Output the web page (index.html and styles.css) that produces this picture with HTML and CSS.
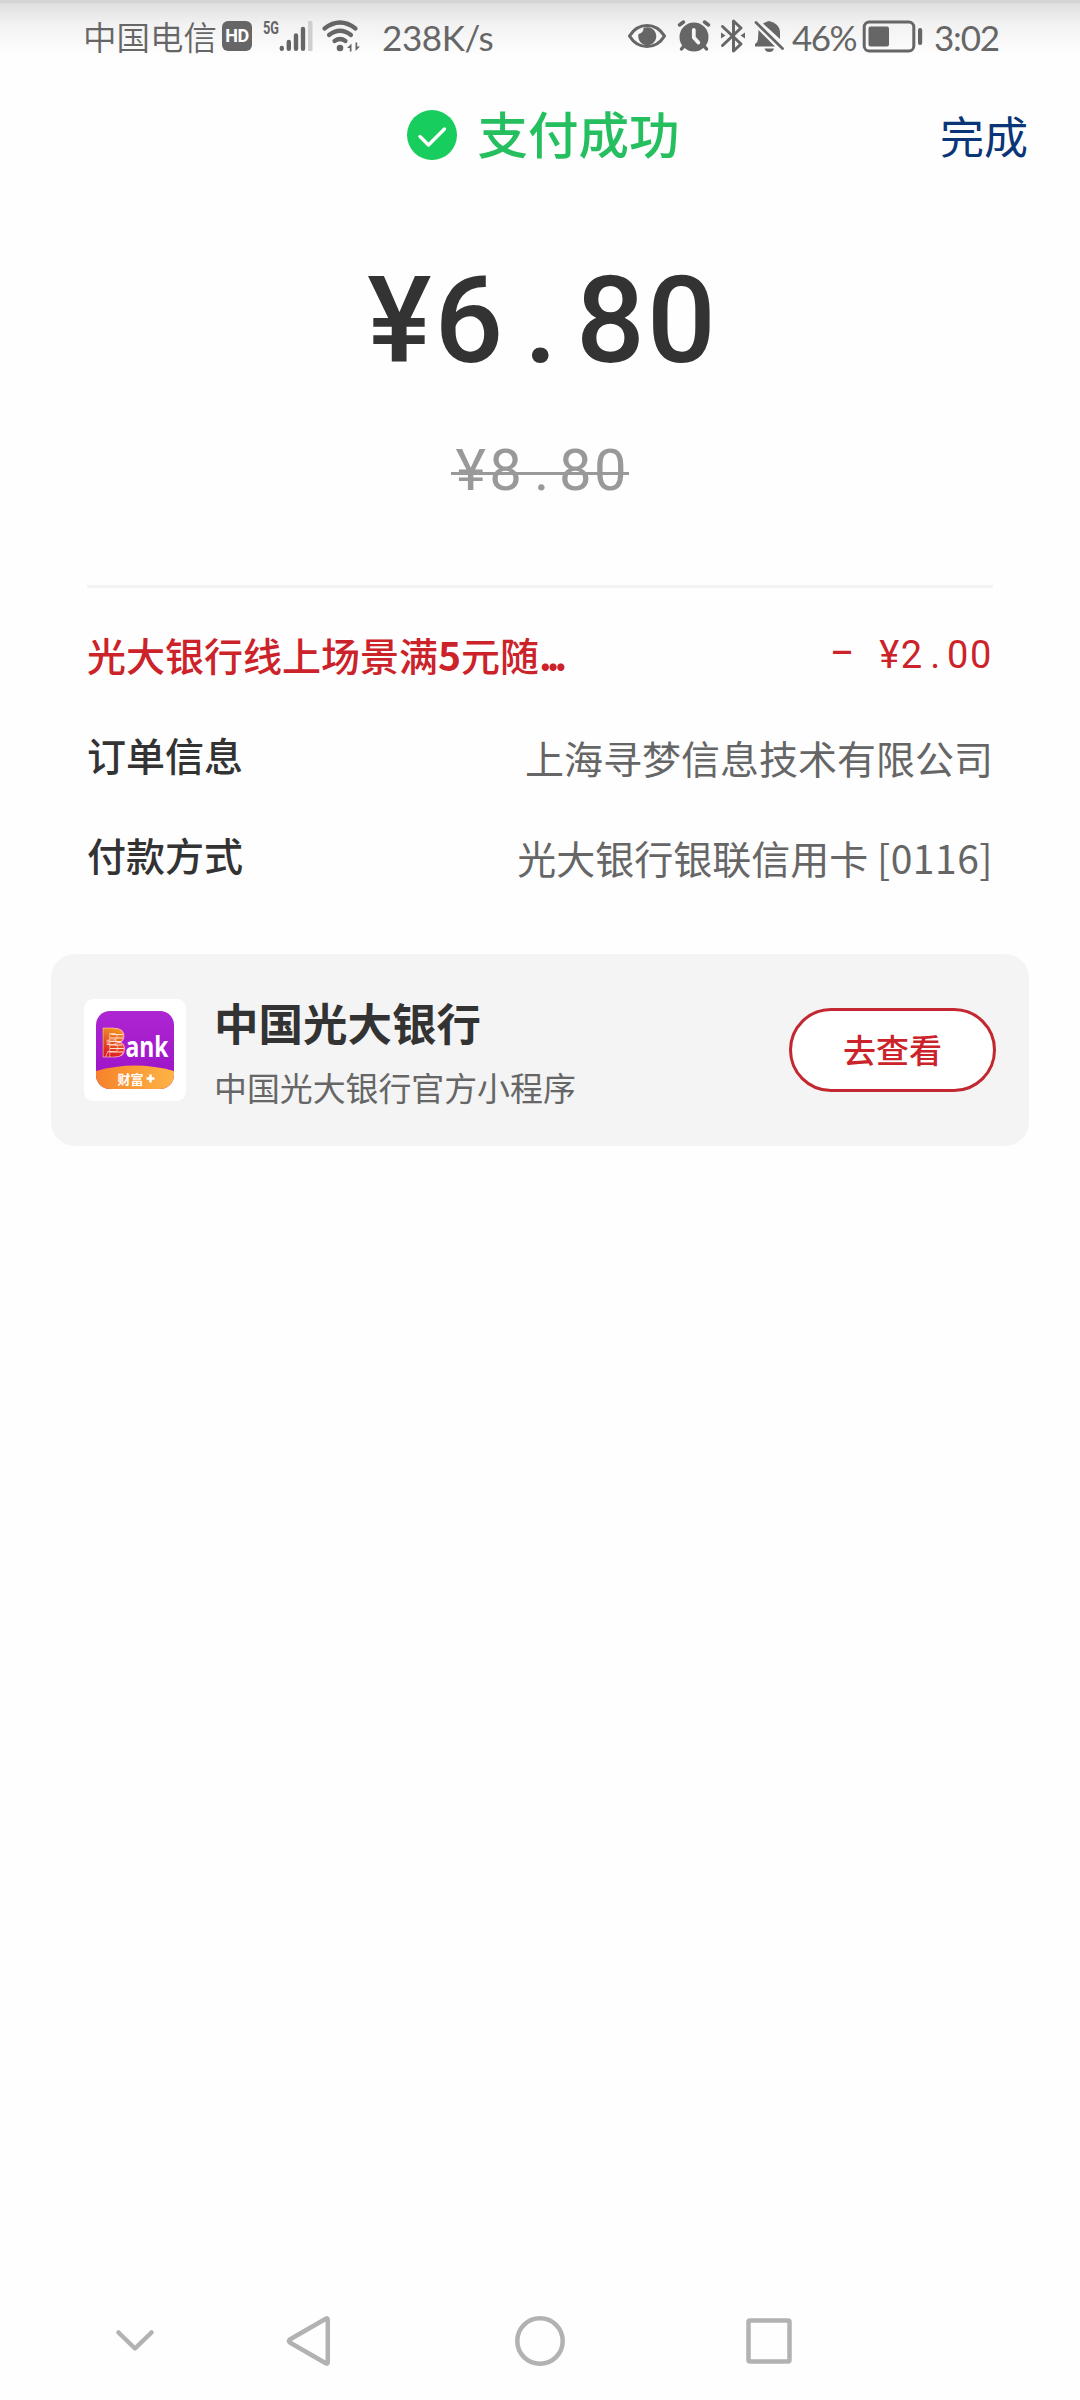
FILE: index.html
```html
<!DOCTYPE html>
<html lang="zh-CN">
<head>
<meta charset="utf-8">
<title>支付成功</title>
<link rel="stylesheet" href="styles.css">
</head>
<body>
<div class="screen">
  <header class="status">
    <div class="status-group">
      <span class="carrier">中国电信</span>
      <span class="hd">HD</span>
      <svg class="cell" width="52" height="36" viewBox="263 18 52 36">
        <text class="net" x="263" y="34" textLength="16" lengthAdjust="spacingAndGlyphs">5G</text>
        <g stroke="#666" stroke-width="4.4" stroke-linecap="round"><path d="M281.8 48v.8M288.8 42v6.8M296 35.500v13.300M303 29v19.800"/></g>
        <rect x="308" y="21" width="4.500" height="30" rx="1" fill="#cfcfcf"/>
      </svg>
      <svg class="wifi" width="40" height="36" viewBox="321 18 40 36">
        <g fill="none" stroke="#666" stroke-width="4.200" stroke-linecap="round"><path d="M324.500 28.500Q340 16.500 355.500 28.500M329 35Q340 26.500 351 35M334.500 41Q340 37 345.500 41"/></g>
        <circle cx="340" cy="48" r="3.300" fill="#666"/>
        <path d="M347 48l4.500-4.500v8h-1.700v-3.500zM360 46.500l-4.500 4.500v-8.500h1.700v4z" fill="#666"/>
      </svg>
      <span class="speed">238K/s</span>
    </div>
    <div class="status-group status-right">
      <svg class="eye" width="38" height="36" viewBox="628 18 38 36">
        <path d="M629.500 36Q636 25.500 647 25.500T664.500 36Q658 46.500 647 46.500T629.500 36Z" fill="none" stroke="#666" stroke-width="3.200" stroke-linejoin="round"/>
        <path d="M643.500 28a9 9 0 1 1-5 6 5.500 5.500 0 0 0 5-6Z" fill="#666"/>
      </svg>
      <svg class="alarm" width="34" height="36" viewBox="677 18 34 36">
        <circle cx="694" cy="37" r="14.500" fill="#666"/>
        <path d="M679.500 25l4-3M708.500 25l-4-3M684 46l-2.500 3M704 46l2.500 3" stroke="#666" stroke-width="3.500" stroke-linecap="round"/>
        <path d="M693.800 30v7.500l4.500 5" fill="none" stroke="#f7f7f7" stroke-width="3.800" stroke-linecap="round" stroke-linejoin="round"/>
      </svg>
      <svg class="bt" width="26" height="36" viewBox="720 18 26 36">
        <path d="M722.500 26.500l18.500 17.500-7.500 7v-30l7.500 7-18.500 17.500" fill="none" stroke="#666" stroke-width="3" stroke-linejoin="round" stroke-linecap="round"/>
        <path d="M721 32.500l4.500 3-4.500 3zM745 32.500l-4.500 3 4.500 3z" fill="#666"/>
      </svg>
      <svg class="bell" width="31" height="36" viewBox="754 18 31 36">
        <path d="M763 23.500q3-2 6-2.500 5 1 8 4 3 3 3 8v6zM758.500 30L775 46.500H755v-2.500q3-2 3-5zM764.500 48.500h9.500q-1 3.500-4.700 3.500t-4.800-3.500z" fill="#666"/>
        <path d="M756 22.500l26.500 26" stroke="#666" stroke-width="2.800" stroke-linecap="round"/>
      </svg>
      <span class="percent">46%</span>
      <svg class="battery" width="60" height="36" viewBox="863 18 60 36">
        <rect x="864.200" y="22" width="49.600" height="29" rx="5" fill="none" stroke="#666" stroke-width="3"/>
        <rect x="868.500" y="26.500" width="20.500" height="20" rx="2" fill="#666"/>
        <rect x="918" y="28" width="4.200" height="17" rx="2" fill="#666"/>
      </svg>
      <span class="time">3:02</span>
    </div>
  </header>

  <div class="titlebar">
    <div class="result">
      <svg width="50" height="50" viewBox="0 0 50 50"><circle cx="25" cy="25" r="25" fill="#17cd5d"/><path d="M13 26.500l8.500 8.500L37.500 19" fill="none" stroke="#fff" stroke-width="3.400" stroke-linecap="round" stroke-linejoin="round"/></svg>
      <span class="result-text">支付成功</span>
    </div>
    <a class="done">完成</a>
  </div>

  <div class="amount"><span class="yen">¥</span>6<span class="dot">.</span>80</div>
  <div class="original"><span class="yen">¥</span>8<span class="dot">.</span>80</div>

  <section class="details">
    <div class="row promo"><span class="label">光大银行线上场景满<b>5</b>元随<b class="more">...</b></span><span class="value discount"><span class="minus">−</span><span class="yen">¥</span>2<span class="dot">.</span>00</span></div>
    <div class="row"><span class="label">订单信息</span><span class="value">上海寻梦信息技术有限公司</span></div>
    <div class="row"><span class="label">付款方式</span><span class="value">光大银行银联信用卡 <span class="digits">[0116]</span></span></div>
  </section>

  <section class="card">
    <div class="logo">
      <svg width="78" height="78" viewBox="0 0 78 78">
        <defs>
          <linearGradient id="purple" x1="0" y1="0" x2="0" y2="1"><stop offset="0" stop-color="#ae25d2"/><stop offset="1" stop-color="#9a12c6"/></linearGradient>
          <linearGradient id="orange" x1="0" y1="0" x2="1" y2="0"><stop offset="0" stop-color="#f6822b"/><stop offset="1" stop-color="#fdb446"/></linearGradient>
          <linearGradient id="red" gradientUnits="userSpaceOnUse" x1="22" y1="17" x2="12" y2="46"><stop offset="0" stop-color="#f29a20"/><stop offset="1" stop-color="#dc1322"/></linearGradient>
          <clipPath id="tile"><rect width="78" height="78" rx="14"/></clipPath>
        </defs>
        <g clip-path="url(#tile)">
          <rect width="78" height="78" fill="url(#purple)"/>
          <path d="M0 60Q39 49 78 60V78H0Z" fill="url(#orange)"/>
        </g>
        <path d="M8 19h14l4 5-2 7 3 5v6l-4 3H8z" fill="url(#red)"/>
        <text class="logo-b" x="5" y="46" textLength="25" lengthAdjust="spacingAndGlyphs" fill="url(#red)">B</text>
        <path d="M15 23.500h12M14 27h13M14 30.500h11M14 34h12M14 37.500h14M14 41h13" stroke="#ffe2d6" stroke-width="1"/>
        <text class="logo-ank" x="29.500" y="45.500" textLength="43" lengthAdjust="spacingAndGlyphs">ank</text>
        <text class="logo-sub" x="21.500" y="72.500">财富</text>
        <path d="M54.500 63.500v8M50.500 67.500h8" stroke="#fff" stroke-width="2.600"/>
      </svg>
    </div>
    <div class="card-text">
      <div class="card-title">中国光大银行</div>
      <div class="card-sub">中国光大银行官方小程序</div>
    </div>
    <a class="view">去查看</a>
  </section>

  <nav class="nav">
    <svg width="38" height="54" viewBox="116 2314 38 54"><path d="M118.500 2332.500L135 2348.500l16.500-16"/></svg>
    <svg width="46" height="54" viewBox="286 2314 46 54"><path d="M289.800 2339.500l36-20.800q2-1 2 1v42.600q0 2-2 1l-36-20.800q-1.500-1.500 0-3z"/></svg>
    <svg width="54" height="54" viewBox="513 2314 54 54"><circle cx="540" cy="2341" r="22.700"/></svg>
    <svg width="50" height="54" viewBox="744 2314 50 54"><rect x="748.500" y="2320.500" width="41" height="41" rx="1.500"/></svg>
  </nav>
</div>
</body>
</html>
```

FILE: styles.css
```css
* { box-sizing: border-box; }
body { margin: 0; background: #fefefe; }
.screen {
  width: 1080px; height: 2400px; display: flex; flex-direction: column;
  font-family: "Noto Sans CJK SC", sans-serif; color: #333; white-space: nowrap;
}
svg { display: block; flex: none; overflow: visible; }

.status {
  height: 80px; padding: 0 82px 8px 83px; display: flex; justify-content: space-between; align-items: center;
  color: #666; background: linear-gradient(#d4d4d4 0, #d4d4d4 3px, #dfdfdf 3.500px, #f2f2f2 24px, #fefefe 56px);
}
.status-group { display: flex; align-items: center; }
.carrier { width: 139px; font-size: 33.500px; line-height: 72px; font-weight: 350; }
.hd { width: 30px; height: 30px; border-radius: 6px; background: #666; color: #fff; font: 700 18px/30px Roboto, sans-serif; text-align: center; letter-spacing: -.5px; }
.cell { margin-left: 11px; }
.net { font: 700 18px Roboto, sans-serif; fill: #666; }
.wifi { margin-left: 6px; }
.speed, .percent, .time { font-family: Lato, sans-serif; font-size: 35px; line-height: 40px; padding-top: 2px; }
.speed { margin-left: 21px; letter-spacing: -.400px; }
.alarm { margin-left: 11px; }
.bt { margin-left: 9px; }
.bell { margin-left: 8px; }
.percent { width: 70px; margin-left: 7px; letter-spacing: -1.600px; }
.battery { margin-left: 1px; }
.time { width: 64px; margin-left: 11px; letter-spacing: -1.200px; }

.titlebar { height: 112px; display: grid; grid-template-columns: 1fr auto 1fr; align-items: center; padding: 0 52px 3px 58px; }
.result { grid-column: 2; display: flex; align-items: center; gap: 21px; color: #25bf60; font-size: 50.500px; line-height: 60px; font-weight: 500; }
.result-text { padding-bottom: 5px; }
.done { justify-self: end; font-size: 44px; line-height: 60px; color: #0a3576; }

.amount, .original, .discount { font-family: Roboto, sans-serif; }
.yen, .dot, .minus { display: inline-block; text-align: center; letter-spacing: 0; }
.amount { margin-top: 57px; height: 144px; padding-left: 2px; text-align: center; font-size: 121px; line-height: 144px; font-weight: 500; letter-spacing: 2.200px; }
.amount .yen, .amount .dot { width: 70.500px; }
.original { align-self: center; margin-top: 41px; height: 72px; padding-left: 1px; font-size: 58px; line-height: 72px; letter-spacing: 2.200px; color: #999; background: linear-gradient(#999, #999) 0 38px / 100% 3px no-repeat; }
.original .yen { width: 37px; }
.original .dot { width: 35px; }

.details { margin: 79px 87px 0; padding-top: 17px; border-top: 3px solid #f4f4f4; }
.row { height: 100px; display: flex; justify-content: space-between; align-items: center; font-size: 39px; line-height: 60px; }
.label { font-weight: 500; padding-bottom: 3px; }
.more { letter-spacing: -5px; }
.value { color: #666; padding-top: 3px; }
.promo, .promo .value { color: #cc2229; }
.promo .value { font-size: 38px; letter-spacing: 1.700px; padding: 0 0 2px; }
.promo .yen, .promo .dot { width: 23px; }
.promo .minus { width: 26px; margin-right: 23px; font-size: 44px; }
.digits { letter-spacing: .500px; }

.card { margin: 49px 51px 0; height: 192px; border-radius: 24px; background: #f4f4f4; display: flex; align-items: center; padding: 0 33px; }
.logo { width: 102px; height: 102px; background: #fff; border-radius: 9px; display: grid; place-items: center; }
.logo-b { font: 900 40px Roboto, sans-serif; stroke: #ffd9cc; stroke-width: .600; }
.logo-ank { font: 700 28px "Open Sans", sans-serif; fill: #fff; }
.logo-sub { font: 700 13px "Noto Sans CJK SC", sans-serif; fill: #fff; }
.card-text { margin-left: 28px; flex: 1; padding-top: 9px; }
.card-title { font-size: 44.500px; line-height: 64px; font-weight: 700; }
.card-sub { font-size: 32.900px; line-height: 66px; color: #666; }
.view { width: 207px; height: 84px; border: 3px solid #c3272f; border-radius: 42px; background: #fff; color: #cc2229; font-size: 33px; line-height: 76px; text-align: center; font-weight: 500; }

.nav { margin-top: auto; height: 118px; padding: 32px 0 0 116px; display: flex; align-items: flex-start; }
.nav svg { fill: none; stroke: #b2b2b2; stroke-width: 4.500px; stroke-linecap: round; stroke-linejoin: round; }
.nav svg:nth-child(2) { margin-left: 132px; }
.nav svg:nth-child(3) { margin-left: 181px; }
.nav svg:nth-child(4) { margin-left: 177px; }
```
